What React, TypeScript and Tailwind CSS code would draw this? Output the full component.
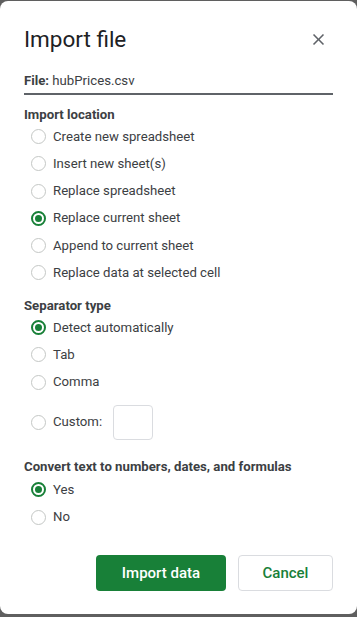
import React, { useState } from 'react';

type Option = { value: string; label: string };

const locationOptions: Option[] = [
  { value: 'create', label: 'Create new spreadsheet' },
  { value: 'insert', label: 'Insert new sheet(s)' },
  { value: 'replace', label: 'Replace spreadsheet' },
  { value: 'current', label: 'Replace current sheet' },
  { value: 'append', label: 'Append to current sheet' },
  { value: 'cell', label: 'Replace data at selected cell' },
];

const separatorOptions: Option[] = [
  { value: 'auto', label: 'Detect automatically' },
  { value: 'tab', label: 'Tab' },
  { value: 'comma', label: 'Comma' },
];

const RadioDot: React.FC<{ checked: boolean }> = ({ checked }) => (
  <span
    className={`flex h-[15px] w-[15px] shrink-0 items-center justify-center rounded-full ${
      checked ? 'border-2 border-[#188038]' : 'border-[1.5px] border-[#c4c7c5]'
    }`}
  >
    {checked && <span className="h-[7px] w-[7px] rounded-full bg-[#188038]" />}
  </span>
);

const RadioRow: React.FC<{
  checked: boolean;
  label: string;
  onSelect: () => void;
}> = ({ checked, label, onSelect }) => (
  <div
    onClick={onSelect}
    className="flex h-[27.3px] cursor-pointer items-center gap-[7px] pl-[7px] text-[13.2px] text-[#3c4043]"
  >
    <RadioDot checked={checked} />
    <span>{label}</span>
  </div>
);

export default function App() {
  const [location, setLocation] = useState('current');
  const [separator, setSeparator] = useState('auto');
  const [convert, setConvert] = useState('yes');

  return (
    <div className="h-[617px] w-[357px] bg-[#5f5f5f] pt-px pb-[3px] font-['Roboto','Liberation_Sans',sans-serif]">
      <div className="flex h-full flex-col rounded-lg bg-white px-6 pt-6">
        {/* header */}
        <div className="flex h-7 items-center justify-between">
          <h1 className="text-[22.5px] leading-7 text-[#202124]">Import file</h1>
          <button className="mr-[5.5px] text-[#5f6368]">
            <svg viewBox="0 0 24 24" className="h-[19px] w-[19px]" fill="currentColor">
              <path d="M19 6.41L17.59 5 12 10.59 6.41 5 5 6.41 10.59 12 5 17.59 6.41 19 12 13.41 17.59 19 19 17.59 13.41 12z" />
            </svg>
          </button>
        </div>

        {/* file name */}
        <div className="mt-[18px] border-b-2 border-[#5f6368] pb-[2px] text-[13.2px] leading-5 text-[#3c4043]">
          <span className="font-bold">File:</span> hubPrices.csv
        </div>

        {/* import location */}
        <div className="mt-[11.5px] text-[13.2px] font-bold leading-4 text-[#3c4043]">Import location</div>
        <div className="mt-[0.3px]">
          {locationOptions.map((o) => (
            <RadioRow
              key={o.value}
              checked={location === o.value}
              label={o.label}
              onSelect={() => setLocation(o.value)}
            />
          ))}
        </div>

        {/* separator */}
        <div className="mt-[11.4px] text-[13.2px] font-bold leading-4 text-[#3c4043]">Separator type</div>
        <div>
          {separatorOptions.map((o) => (
            <RadioRow
              key={o.value}
              checked={separator === o.value}
              label={o.label}
              onSelect={() => setSeparator(o.value)}
            />
          ))}
          <div
            onClick={() => setSeparator('custom')}
            className="mt-[8.7px] flex h-[35px] items-center gap-[7px] pl-[7px] text-[13.2px] text-[#3c4043]"
          >
            <RadioDot checked={separator === 'custom'} />
            <span>Custom:</span>
            <input
              type="text"
              className="ml-[3.5px] h-[35px] w-10 rounded border border-[#dadce0] outline-none"
            />
          </div>
        </div>

        {/* convert */}
        <div className="mt-[19.7px] text-[13.2px] font-bold leading-4 text-[#3c4043]">
          Convert text to numbers, dates, and formulas
        </div>
        <div className="mt-px">
          <RadioRow checked={convert === 'yes'} label="Yes" onSelect={() => setConvert('yes')} />
          <RadioRow checked={convert === 'no'} label="No" onSelect={() => setConvert('no')} />
        </div>

        {/* actions */}
        <div className="mt-[24.6px] flex justify-end gap-3">
          <button className="h-9 w-[130px] rounded bg-[#188038] text-[15px] font-medium text-white">
            Import data
          </button>
          <button className="h-9 w-[95px] rounded border border-[#dadce0] bg-white text-[15px] font-medium text-[#188038]">
            Cancel
          </button>
        </div>
      </div>
    </div>
  );
}
